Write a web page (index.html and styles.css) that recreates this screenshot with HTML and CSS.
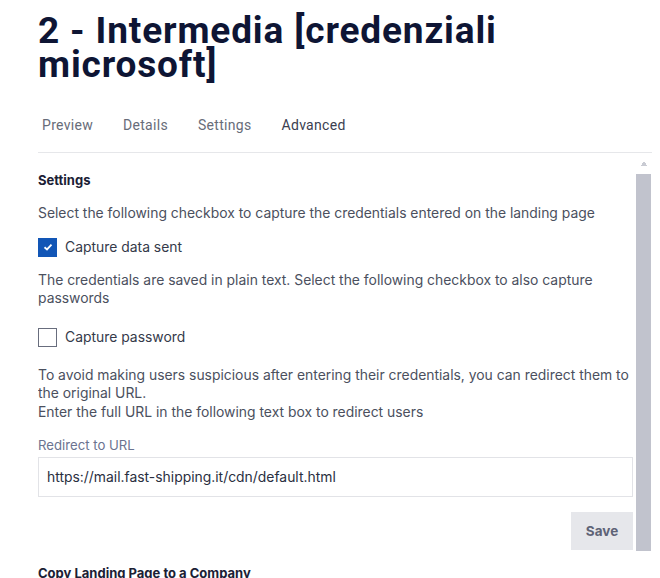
FILE: index.html
```html
<!DOCTYPE html>
<html>
<head>
  <meta charset="utf-8">
  <meta name="viewport" content="width=device-width, initial-scale=1">
  <title>2 - Intermedia [credenziali microsoft]</title>
  <link rel="stylesheet" href="styles.css">
</head>
<body>
  <div class="page">
    <h1 class="page-title">2 - Intermedia [credenziali microsoft]</h1>

    <nav class="tabs">
      <a class="tab">Preview</a>
      <a class="tab">Details</a>
      <a class="tab">Settings</a>
      <a class="tab active">Advanced</a>
    </nav>

    <div class="panel">
      <div class="panel-body">
        <section class="section">
          <h3 class="section-title">Settings</h3>
          <p class="text">Select the following checkbox to capture the credentials entered on the landing page</p>

          <label class="check">
            <span class="box checked">
              <svg width="10" height="8" viewBox="0 0 10 8"><path d="M1.5 4.2 L4 6.4 L8.5 1.6" fill="none" stroke="#fff" stroke-width="1.8"/></svg>
            </span>
            Capture data sent
          </label>

          <p class="text">The credentials are saved in plain text. Select the following checkbox to also capture passwords</p>

          <label class="check">
            <span class="box"></span>
            Capture password
          </label>

          <p class="text text-wide">To avoid making users suspicious after entering their credentials, you can redirect them to the original URL.<br>Enter the full URL in the following text box to redirect users</p>

          <div class="field">
            <label class="field-label" for="redirect">Redirect to URL</label>
            <input class="input" type="text" id="redirect" value="https://mail.fast-shipping.it/cdn/default.html">
          </div>

          <div class="actions">
            <button class="btn">Save</button>
          </div>
        </section>

        <section class="section section-last">
          <h3 class="section-title">Copy Landing Page to a Company</h3>
        </section>
      </div>

      <!-- scrollbar of the panel -->
      <div class="scrollbar">
        <span class="scroll-up"></span>
        <span class="scroll-thumb"></span>
      </div>
    </div>
  </div>
</body>
</html>
```

FILE: styles.css
```css
html, body {
  margin: 0;
  height: 100%;
  overflow: hidden;
  background: #fff;
}

body {
  font-family: Inter, "Noto Sans", sans-serif;
  color: #1d2235;
}

.page {
  margin: 0 8px 0 38px;
  display: flex;
  flex-direction: column;
  height: 100%;
}

.page-title {
  font-family: Roboto, sans-serif;
  font-weight: 700;
  font-size: 37px;
  letter-spacing: 0.85px;
  line-height: 34px;
  color: #0e1534;
  margin: 14px 0 0 0;
  max-width: 480px;
}

.tabs {
  display: flex;
  flex-shrink: 0;
  gap: 30px;
  padding: 0 0 0 4px;
  margin-top: 33px;
  height: 37px;
  border-bottom: 1px solid #e6e7ea;
}

.tab {
  font-family: Roboto, sans-serif;
  font-size: 14px;
  letter-spacing: 0.3px;
  line-height: 20px;
  color: #676c79;
  cursor: pointer;
}

.tab.active {
  color: #3b4050;
}

.panel {
  flex: 1;
  min-height: 0;
  display: flex;
}

.panel-body {
  flex: 1;
  min-width: 0;
  overflow: hidden;
  padding-right: 2px;
}

.scrollbar {
  width: 17px;
  flex-shrink: 0;
  display: flex;
  flex-direction: column;
  align-items: center;
}

.scroll-up {
  height: 21px;
  width: 100%;
  background: conic-gradient(from 145deg at 50% 0, #c9cbd3 70deg, transparent 0) center 8px / 8px 5px no-repeat;
}

.scroll-thumb {
  width: 15px;
  height: 377px;
  background: #c1c3cd;
}

.section {
  padding-top: 19px;
}

.section-last {
  padding-top: 15px;
  padding-bottom: 8px;
}

.section-title {
  font-size: 13px;
  font-weight: 700;
  line-height: 16px;
  margin: 0 0 16px 0;
  color: #1b2034;
}

.text {
  font-size: 13.9px;
  line-height: 18.5px;
  color: #4b505e;
  margin: 0 0 15px 0;
}

.text-wide {
  margin-bottom: 15px;
}

.check {
  display: flex;
  align-items: center;
  gap: 8px;
  font-size: 13.9px;
  color: #353a4a;
  margin: 0 0 14px 0;
  height: 19px;
}

.check + .text + .check {
  margin-top: 20px;
  margin-bottom: 19px;
}

.box {
  width: 19px;
  height: 19px;
  box-sizing: border-box;
  border: 1px solid #686d7d;
  display: flex;
  align-items: center;
  justify-content: center;
}

.box.checked {
  background: #1256b6;
  border-color: #1256b6;
}

.field {
  display: flex;
  flex-direction: column;
  gap: 3px;
  margin-top: 14px;
}

.field-label {
  font-size: 13.2px;
  line-height: 18px;
  color: #6b7390;
}

.input {
  font-family: Inter, "Noto Sans", sans-serif;
  font-size: 13.9px;
  color: #2a2f3f;
  height: 40px;
  box-sizing: border-box;
  border: 1px solid #e2e3e7;
  padding: 0 8px;
  width: 100%;
  outline: none;
}

.actions {
  display: flex;
  justify-content: flex-end;
  margin-top: 15px;
}

.btn {
  font-family: Inter, "Noto Sans", sans-serif;
  font-size: 13.5px;
  font-weight: 700;
  color: #5e6376;
  background: #e6e7eb;
  border: none;
  width: 62px;
  height: 38px;
  cursor: pointer;
}
```
